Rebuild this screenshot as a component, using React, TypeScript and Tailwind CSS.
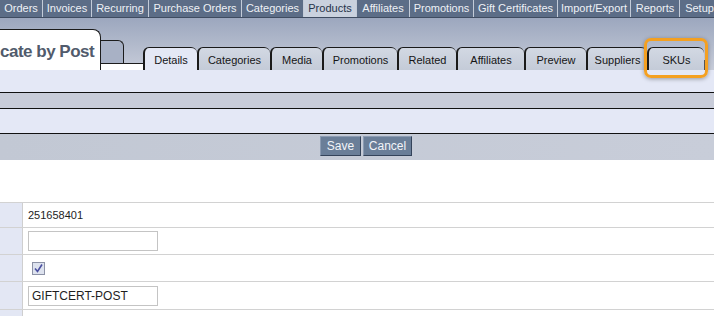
import React from "react";

const navItems = [
  { label: "Orders", w: "w-[43px]" },
  { label: "Invoices", w: "w-[49px]" },
  { label: "Recurring", w: "w-[57px]" },
  { label: "Purchase Orders", w: "w-[93px]" },
  { label: "Categories", w: "w-[62px]" },
  { label: "Products", w: "w-[53px]", active: true },
  { label: "Affiliates", w: "w-[53px]" },
  { label: "Promotions", w: "w-[64px]" },
  { label: "Gift Certificates", w: "w-[84px]" },
  { label: "Import/Export", w: "w-[73px]" },
  { label: "Reports", w: "w-[49px]" },
  { label: "Setup", w: "w-[40px]" },
];

const tabs = [
  { label: "Details", w: "w-[54px]", active: true },
  { label: "Categories", w: "w-[73px]" },
  { label: "Media", w: "w-[52px]" },
  { label: "Promotions", w: "w-[75px]" },
  { label: "Related", w: "w-[59px]" },
  { label: "Affiliates", w: "w-[68px]" },
  { label: "Preview", w: "w-[62px]" },
  { label: "Suppliers", w: "w-[61px]" },
  { label: "SKUs", w: "w-[57px]" },
];

const App = () => {
  return (
    <div className="relative w-[714px] h-[316px] overflow-hidden bg-white font-['Liberation_Sans',Arial,sans-serif] text-[11px]">
      {/* === Top nav === */}
      <div className="flex h-[18px] bg-[#5c6d87] border-b border-[#3f4c61]">
        {navItems.map((item, i) => (
          <div
            key={i}
            className={`${item.w} shrink-0 flex items-center justify-center whitespace-nowrap border-r border-[#c3cbd8] leading-none ${
              item.active ? "bg-[#c9d1de] text-[#26334a]" : "text-[#eef1f6]"
            }`}
          >
            {item.label}
          </div>
        ))}
      </div>

      {/* === Tab row === */}
      <div className="flex items-end h-[52px] bg-gradient-to-b from-[#9ca7be] to-[#c7ccd9]">
        <div className="flex items-end w-[143px] h-full shrink-0">
          <div className="w-[101px] h-[41px] shrink-0 bg-white border-t border-r border-[#1c1c1c] rounded-tr-[8px] pt-[13px]">
            <span className="whitespace-nowrap text-[17px] font-bold tracking-[-0.5px] text-[#515b6c] leading-none">
              cate by Post
            </span>
          </div>
          <div className="flex flex-col w-[42px]">
            <div className="w-[23px] h-[23px] border-t border-r border-[#1c1c1c] rounded-tr-[6px] bg-[#a8b1c5]" />
            <div className="h-px bg-[#1c1c1c]" />
            <div className="h-[6px] bg-white" />
          </div>
        </div>
        <div className="flex items-end">
          {tabs.map((t, i) => (
            <div
              key={i}
              className={`${t.w} h-[23px] shrink-0 flex items-center justify-center pt-[2px] border-t border-l-2 border-[#1a1a1a] rounded-t-[6px] text-[#151515] ${
                t.active ? "bg-[#e4e8f5]" : "bg-gradient-to-b from-[#d2d8e3] to-[#c4cbd8]"
              }`}
            >
              {t.label}
            </div>
          ))}
          <div className="w-[10px] h-[10px] border-l border-[#555]" />
        </div>
      </div>

      {/* orange highlight round the SKUs tab */}
      <div className="absolute left-[644px] top-[38px] w-[64px] h-[40px] border-[3px] border-[#f4a021] rounded-[7px] shadow-[0_1px_4px_rgba(0,0,0,0.35)]" />

      {/* === Bands === */}
      <div className="h-[23px] bg-[#e4e8f6] border-b border-[#111]" />
      <div className="h-[16px] bg-[#c8ccd9] border-b border-[#111]" />
      <div className="h-[25px] bg-[#e4e8f6] border-b border-[#111]" />
      <div className="h-[26px] bg-gradient-to-r from-[#c2c8d4] to-[#c8cdd9] flex items-start pt-[2px] pl-[320px] gap-[2px]">
        <button className="w-[41px] h-[20px] bg-[#6a7e98] text-[#f2f4f8] text-[12px] border border-t-[#8b9bb2] border-l-[#8b9bb2] border-r-[#34435a] border-b-[#34435a]">
          Save
        </button>
        <button className="w-[49px] h-[20px] bg-[#6a7e98] text-[#f2f4f8] text-[12px] border border-t-[#8b9bb2] border-l-[#8b9bb2] border-r-[#34435a] border-b-[#34435a]">
          Cancel
        </button>
      </div>

      <div className="h-[42px] bg-white" />

      {/* === Form rows === */}
      <div className="border-t border-[#d2d2d2] text-[#1e1e1e]">
        <div className="flex h-[25px] border-b border-[#d2d2d2]">
          <div className="w-[23px] bg-[#e3e7f4] border-r border-[#cfcfcf]" />
          <div className="flex items-center pl-[5px] text-[11px]">251658401</div>
        </div>
        <div className="flex h-[27px] border-b border-[#d2d2d2]">
          <div className="w-[23px] bg-[#e3e7f4] border-r border-[#cfcfcf]" />
          <div className="flex items-center pl-[5px]">
            <div className="w-[130px] h-[20px] border border-[#c4c4c4] bg-white" />
          </div>
        </div>
        <div className="flex h-[27px] border-b border-[#d2d2d2]">
          <div className="w-[23px] bg-[#e3e7f4] border-r border-[#cfcfcf]" />
          <div className="flex items-center pl-[9px]">
            <span className="w-[13px] h-[13px] border border-[#8c92a6] bg-[#dde2ee] flex items-center justify-center">
              <svg width="9" height="9" viewBox="0 0 9 9">
                <path d="M1 4.5 L3.5 7.5 L8 0.5" stroke="#4a4fa0" strokeWidth="1.6" fill="none" />
              </svg>
            </span>
          </div>
        </div>
        <div className="flex h-[28px] border-b border-[#d2d2d2]">
          <div className="w-[23px] bg-[#e3e7f4] border-r border-[#cfcfcf]" />
          <div className="flex items-center pl-[5px]">
            <div className="w-[130px] h-[20px] border border-[#c4c4c4] bg-white flex items-center pl-[3px] text-[12px]">
              GIFTCERT-POST
            </div>
          </div>
        </div>
        <div className="flex h-[25px]">
          <div className="w-[23px] bg-[#e3e7f4] border-r border-[#cfcfcf]" />
        </div>
      </div>
    </div>
  );
};

export default App;
